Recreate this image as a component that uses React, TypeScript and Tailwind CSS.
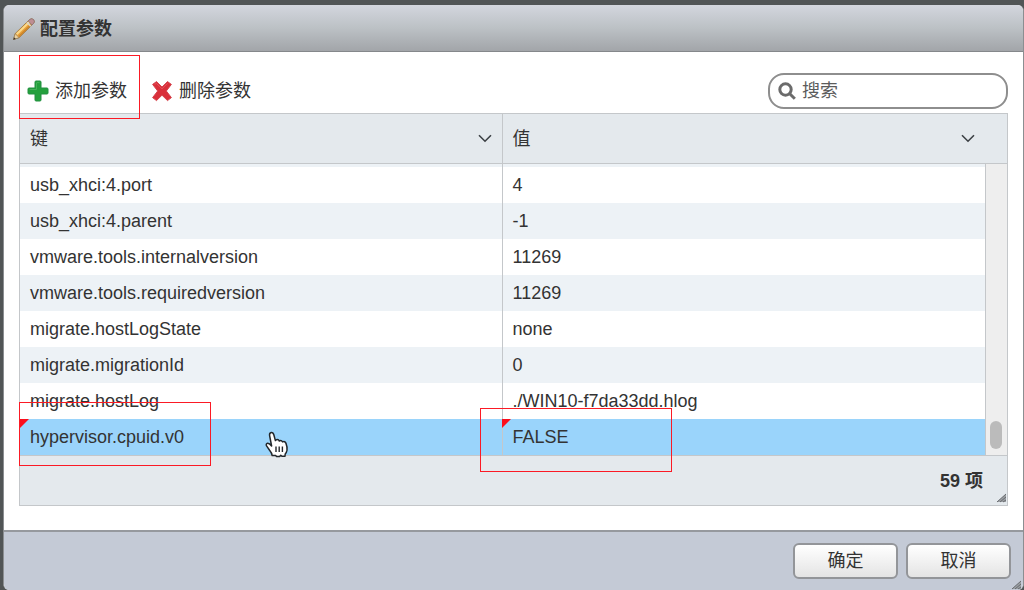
import React, { useState } from 'react';

const parameters = [
  { key: 'usb_xhci:4.port', value: '4' },
  { key: 'usb_xhci:4.parent', value: '-1' },
  { key: 'vmware.tools.internalversion', value: '11269' },
  { key: 'vmware.tools.requiredversion', value: '11269' },
  { key: 'migrate.hostLogState', value: 'none' },
  { key: 'migrate.migrationId', value: '0' },
  { key: 'migrate.hostLog', value: './WIN10-f7da33dd.hlog' },
  { key: 'hypervisor.cpuid.v0', value: 'FALSE' },
];

const totalCount = 59;

const PencilIcon: React.FC = () => (
  <svg width="24" height="24" viewBox="0 0 24 24" aria-hidden="true">
    <path d="M1.5 22.5 3.2 16.6 17.5 2.6Q19.5.8 21.6 2.6 23.3 4.6 21.4 6.6L7.2 20.6Z" fill="#e9a23c" stroke="#94703c" strokeWidth=".8" />
    <path d="M4.6 17.2 18 4.2" stroke="#fbd98a" strokeWidth="2" />
    <path d="M6.8 19.4 20 6.4" stroke="#cd8428" strokeWidth="1.4" />
    <path d="M16.2 4 17.6 2.6Q19.5.8 21.6 2.6 23.3 4.6 21.4 6.6L20 8Z" fill="#bf8d92" stroke="#8d777b" strokeWidth=".8" />
    <path d="M15 5.2 18.8 9.2" stroke="#d8d4cc" strokeWidth="1.6" />
    <path d="M1.5 22.5 3.2 16.8 7 20.6Z" fill="#ecd2a3" stroke="#8d7a5c" strokeWidth=".6" />
    <path d="M1.3 22.7 2 20.2 3.8 22Z" fill="#37322b" />
  </svg>
);

const AddIcon: React.FC = () => (
  <svg width="22" height="22" viewBox="0 0 22 22" aria-hidden="true">
    <path
      d="M9 1h4q1 0 1 1v6h6q1 0 1 1v4q0 1-1 1h-6v6q0 1-1 1H9q-1 0-1-1v-6H2q-1 0-1-1V9q0-1 1-1h6V2q0-1 1-1Z"
      fill="#23a03c"
      stroke="#239040"
    />
    <path d="M9.5 2.6h3M2.6 9.5h6.9V3" fill="none" stroke="#45b058" />
  </svg>
);

const RemoveIcon: React.FC = () => (
  <svg width="22" height="22" viewBox="0 0 22 22" aria-hidden="true">
    <path
      d="M5.5 1.6 11 7 16.5 1.6 20.4 4.4 15.3 11 20.4 17.6 16.5 20.6 11 15.2 5.5 20.6 1.6 17.6 6.7 11 1.6 4.4Z"
      fill="#d92f3a"
      stroke="#d5444e"
      strokeLinejoin="round"
    />
    <path d="M3.6 4.6 5.3 3.3 11 8.8 16.7 3.3" fill="none" stroke="#e4525c" />
  </svg>
);

const SearchIcon: React.FC = () => (
  <svg className="shrink-0" width="18" height="18" viewBox="0 0 18 18" fill="none" stroke="#6b6b6b" aria-hidden="true">
    <circle cx="7.5" cy="7.5" r="5.7" strokeWidth="3" />
    <path d="M11.5 11.5 16.8 16.8" strokeWidth="3" />
  </svg>
);

const ChevronIcon: React.FC = () => (
  <svg width="14" height="9" viewBox="0 0 14 9" fill="none" stroke="#3c4145" strokeWidth="1.6" aria-hidden="true">
    <path d="M1 1.2 7 7.2 13 1.2" />
  </svg>
);

const ResizeGrip: React.FC = () => (
  <svg width="10" height="10" viewBox="0 0 10 10" fill="none" aria-hidden="true">
    <path d="M10 1V9H1Z" fill="#9b9fa3" />
    <path d="M1 9 10 1M4 9 10 4M7 9 10 7" stroke="#686b6f" strokeWidth="1" />
  </svg>
);

const HandCursor: React.FC = () => (
  <svg className="absolute left-[245px] top-3 z-10" width="24" height="27" viewBox="0 0 24 27" aria-hidden="true">
    <path
      d="M7.2 24.6Q6.8 21.8 4.6 19.2L1.4 14.6Q.8 12.6 2.6 12.2 4.4 12 6.6 15L4.6 4.6Q4.2 1.8 6.2 1.5 8.2 1.3 8.9 4L10.4 9.6Q11.2 8 13.2 8.7 14 9 14.3 10 16.2 8.8 17.6 10.9 20 9.9 21 12.4 22.4 16 22 19.2 21.6 21.6 20.2 23L20 25.2H16.9L15.8 24.2 14.6 25.6H11.6L10.6 24.4Z"
      fill="#fff"
      stroke="#22272b"
      strokeWidth="1.5"
      strokeLinejoin="round"
    />
    <path d="M11 15.4V21M14.2 15.4V21M17.4 15.4V21" stroke="#22272b" strokeWidth="1.4" />
  </svg>
);

const EditedMark: React.FC<{ className: string }> = ({ className }) => (
  <svg className={`absolute top-0 ${className}`} width="9" height="9" viewBox="0 0 9 9" aria-hidden="true">
    <path d="M0 0H9L0 9Z" fill="#fb0d1b" />
  </svg>
);

const Highlight: React.FC<{ className: string }> = ({ className }) => (
  <span className={`pointer-events-none absolute z-10 border border-[#fb1a25] ${className}`} />
);

export default function App() {
  const [query, setQuery] = useState('');

  return (
    <div className="flex min-h-screen flex-col bg-[#515556] pl-[3px] pt-[5px] font-['Liberation_Sans','Noto_Sans_CJK_SC',sans-serif] text-lg leading-6 text-[#333]">
      <div className="relative flex flex-1 flex-col overflow-hidden rounded-md border-x border-[#8b8e91] bg-white">
        <header className="flex h-[47px] items-center gap-1 border-b border-[#85888b] bg-linear-to-b from-[#d3d6de] via-[#bcc1c5] to-[#a2a5a9] px-2 pt-0.5">
          <PencilIcon />
          <h1 className="font-bold">配置参数</h1>
        </header>

        <main className="flex-1 px-[15px] pb-6">
          <div className="flex h-[61px] items-end justify-between pb-1">
            <div className="flex h-9 items-center gap-6">
              <div className="relative">
                <button type="button" className="flex items-center gap-1.5 pl-2">
                  <AddIcon />
                  添加参数
                </button>
                <Highlight className="-top-6 left-0 h-16 w-[121px]" />
              </div>
              <button type="button" className="flex items-center gap-1.5">
                <RemoveIcon />
                删除参数
              </button>
            </div>
            <label className="flex h-9 w-60 items-center gap-1.5 rounded-2xl border-2 border-[#8e8e8e] px-2">
              <SearchIcon />
              <input
                type="text"
                aria-label="搜索"
                placeholder="搜索"
                value={query}
                onChange={(e) => setQuery(e.target.value)}
                className="w-full min-w-0 bg-transparent outline-none placeholder:text-[#5c5c5c]"
              />
            </label>
          </div>

          <div className="border border-[#c4c7ca]">
            <table className="w-full table-fixed border-separate border-spacing-0 text-left">
              <colgroup>
                <col />
                <col />
                <col className="w-[22px]" />
              </colgroup>
              <thead>
                <tr className="h-[50px] bg-[#e4e9ed]">
                  <th className="border-b border-r border-[#c4c7ca] px-2.5 font-normal">
                    <div className="flex items-center justify-between">
                      键
                      <ChevronIcon />
                    </div>
                  </th>
                  <th className="border-b border-[#c4c7ca] px-2.5 font-normal">
                    <div className="flex items-center justify-between">
                      值
                      <ChevronIcon />
                    </div>
                  </th>
                  <th className="border-b border-[#c4c7ca]" />
                </tr>
              </thead>
              <tbody>
                <tr className="h-[3px] bg-[#edf2f6]">
                  <td className="border-r border-[#c4c7ca] p-0" />
                  <td className="p-0" />
                  <td rowSpan={9} className="border-l border-[#c4c7ca] bg-[#eee] px-1 pb-1.5 align-bottom">
                    <div className="h-7 w-3 rounded-full bg-[#bbb]" />
                  </td>
                </tr>
                {parameters.map((item, index) => {
                  const selected = index === parameters.length - 1;
                  const rowColor = selected ? 'bg-[#9ad4fb]' : index % 2 === 1 ? 'bg-[#edf2f6]' : 'bg-white';
                  return (
                    <tr key={item.key} className={`h-9 ${rowColor}`}>
                      <td className="relative border-r border-[#c4c7ca] px-2.5 py-0">
                        {item.key}
                        {selected && (
                          <>
                            <EditedMark className="left-0" />
                            <HandCursor />
                            <Highlight className="-left-px -top-[17px] h-16 w-48" />
                          </>
                        )}
                      </td>
                      <td className="relative px-2.5 py-0">
                        {item.value}
                        {selected && (
                          <>
                            <EditedMark className="-left-px" />
                            <Highlight className="-left-[23px] -top-[11px] h-16 w-48" />
                          </>
                        )}
                      </td>
                    </tr>
                  );
                })}
              </tbody>
            </table>
            <div className="relative flex h-[50px] items-center justify-end border-t border-[#c4c7ca] bg-[#e4e9ed] px-6 font-bold">
              {totalCount} 项
              <div className="absolute bottom-0.5 right-px">
                <ResizeGrip />
              </div>
            </div>
          </div>
        </main>

        <footer className="flex h-[60px] items-center justify-end gap-2 border-t-2 border-[#96999e] bg-[#c4cad6] px-3">
          <button type="button" className="h-9 w-[105px] rounded-md border-2 border-[#939599] bg-linear-to-b from-white to-[#e4e4e4]">
            确定
          </button>
          <button type="button" className="h-9 w-[105px] rounded-md border-2 border-[#939599] bg-linear-to-b from-white to-[#e4e4e4]">
            取消
          </button>
        </footer>
        <div className="absolute bottom-0 right-0.5">
          <ResizeGrip />
        </div>
      </div>
    </div>
  );
}
